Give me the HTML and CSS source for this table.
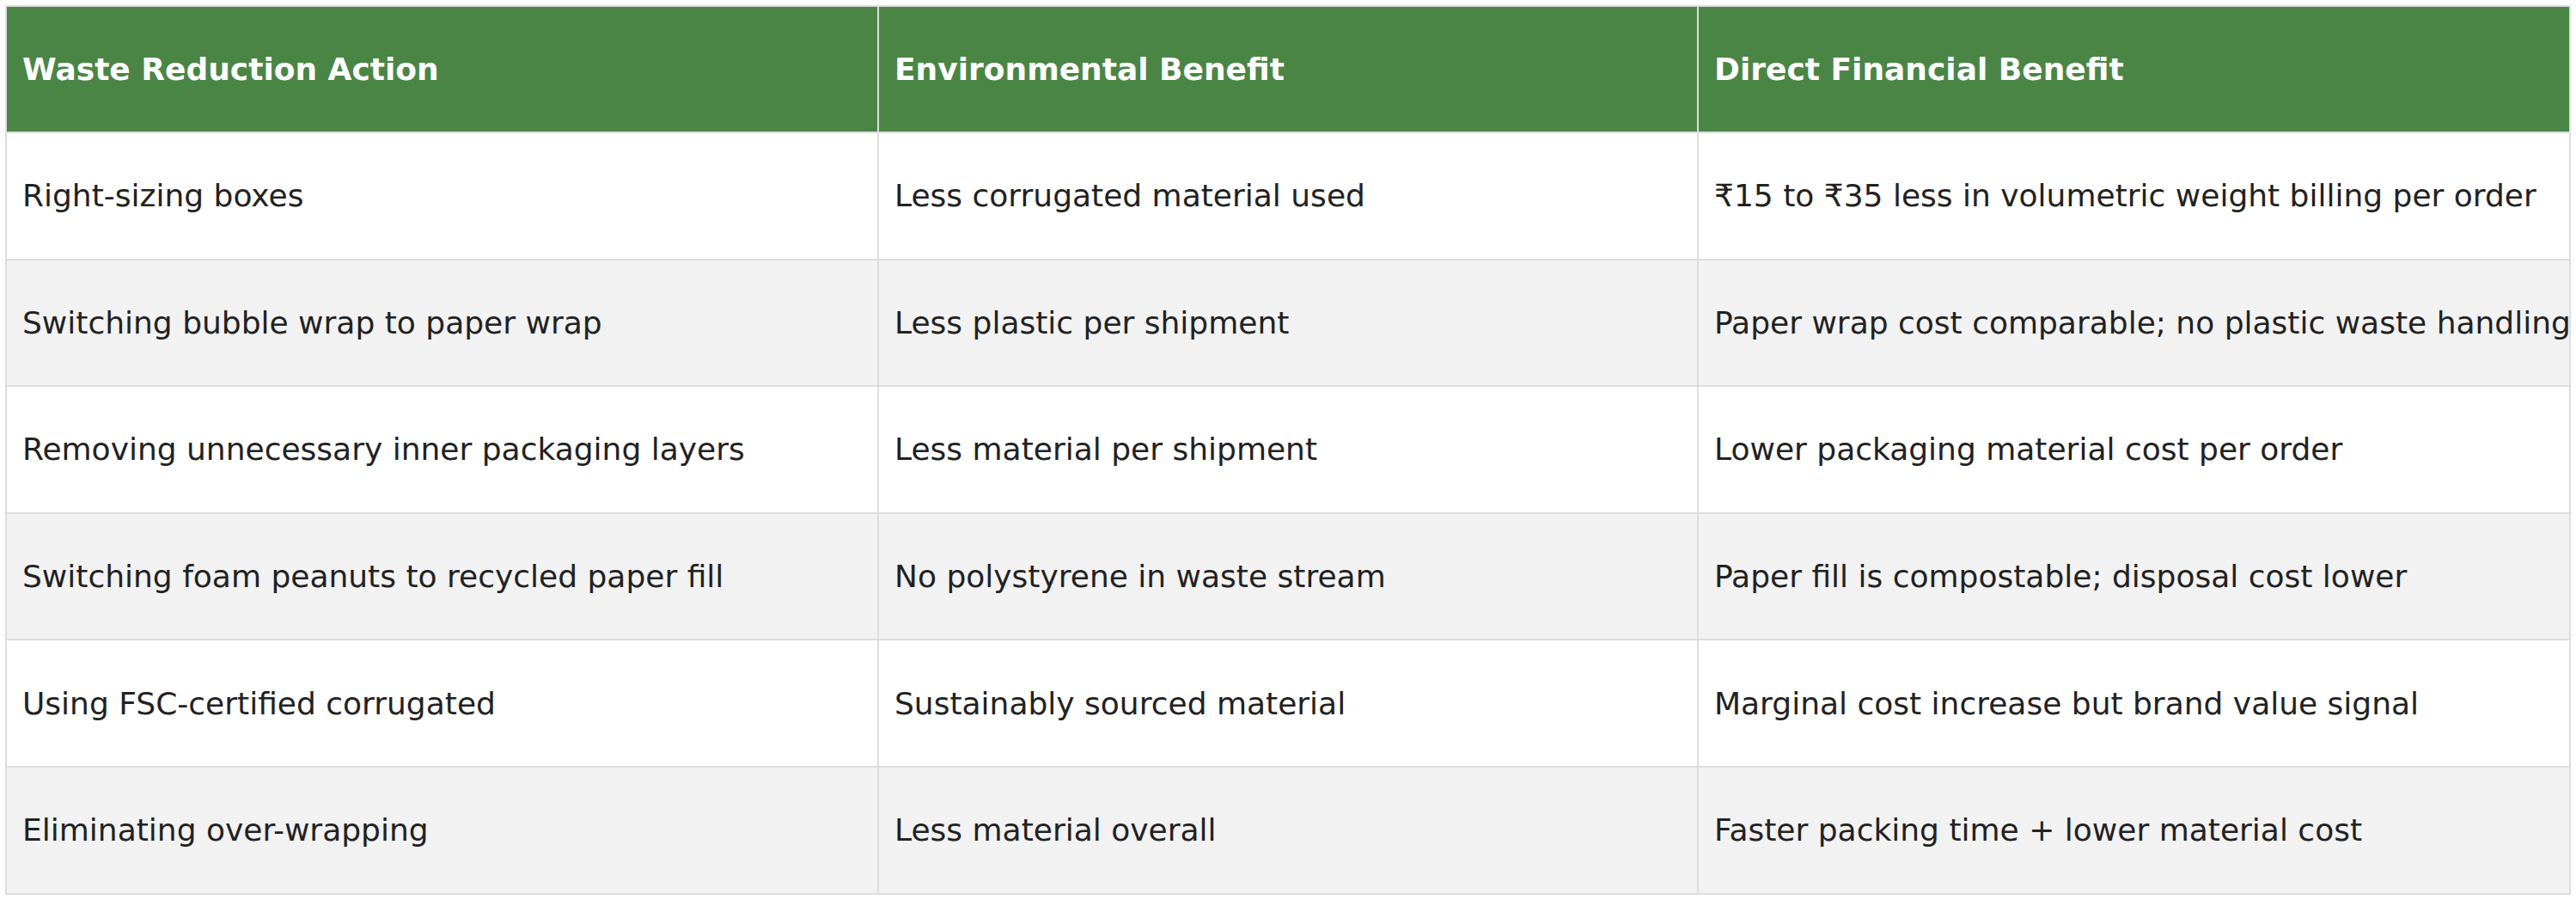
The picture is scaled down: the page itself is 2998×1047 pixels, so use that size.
FILE: index.html
```html
<!DOCTYPE html>
<html>
<head>
<meta charset="utf-8">
<link rel="stylesheet" href="styles.css">
</head>
<body>
<div class="wrap">
<table class="tbl">
<colgroup>
<col class="c1"><col class="c2"><col class="c3">
</colgroup>
<thead>
<tr><th>Waste Reduction Action</th><th>Environmental Benefit</th><th>Direct Financial Benefit</th></tr>
</thead>
<tbody>
<tr><td>Right-sizing boxes</td><td>Less corrugated material used</td><td>₹15 to ₹35 less in volumetric weight billing per order</td></tr>
<tr><td>Switching bubble wrap to paper wrap</td><td>Less plastic per shipment</td><td>Paper wrap cost comparable; no plastic waste handling</td></tr>
<tr><td>Removing unnecessary inner packaging layers</td><td>Less material per shipment</td><td>Lower packaging material cost per order</td></tr>
<tr><td>Switching foam peanuts to recycled paper fill</td><td>No polystyrene in waste stream</td><td>Paper fill is compostable; disposal cost lower</td></tr>
<tr><td>Using FSC-certified corrugated</td><td>Sustainably sourced material</td><td>Marginal cost increase but brand value signal</td></tr>
<tr><td>Eliminating over-wrapping</td><td>Less material overall</td><td>Faster packing time + lower material cost</td></tr>
</tbody>
</table>
</div>
</body>
</html>
```
FILE: styles.css
```css
html, body {
  margin: 0;
  padding: 0;
  background: #ffffff;
}
.wrap {
  padding: 6px 6px;
}
.tbl {
  border-collapse: collapse;
  table-layout: fixed;
  width: 2984px;
  font-family: "DejaVu Sans", "Liberation Sans", sans-serif;
  font-size: 36px;
  color: #222222;
}
.c1 { width: 1015px; }
.c2 { width: 954px; }
.c3 { width: 1015px; }
.tbl th,
.tbl td {
  border: 2px solid #dddddd;
  padding: 0 18px;
  height: 145.6px;
  text-align: left;
  vertical-align: middle;
  white-space: nowrap;
  overflow: visible;
}
.tbl th {
  background: #4a8546;
  color: #ffffff;
  font-weight: bold;
  height: 145px;
}
.tbl thead th + th {
  border-left: 2px solid #e4ebe3;
}
.tbl tbody tr:nth-child(even) td {
  background: #f2f2f2;
}
```
